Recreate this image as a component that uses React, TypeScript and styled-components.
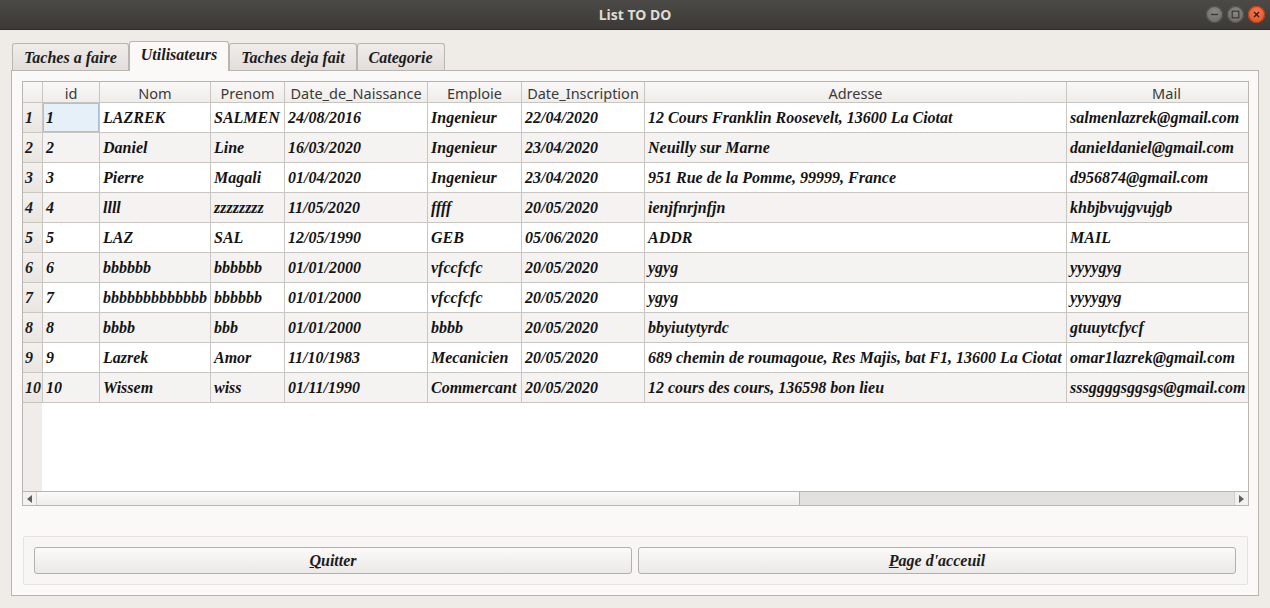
import styled, { createGlobalStyle } from "styled-components";

const GlobalStyle = createGlobalStyle`
  html, body {
    margin: 0;
    padding: 0;
    background: #efebe7;
  }
  * {
    box-sizing: border-box;
  }
`;

const Window = styled.div`
  width: 1270px;
  height: 608px;
  display: flex;
  flex-direction: column;
  background: #efebe7;
  overflow: hidden;
`;

const TitleBar = styled.div`
  height: 30px;
  flex: none;
  position: relative;
  display: flex;
  align-items: center;
  justify-content: center;
  background: linear-gradient(#4b4a46, #3b3a36);
  border-bottom: 1px solid #2c2b28;
  color: #dfdbd2;
  font-family: "Noto Sans", "DejaVu Sans", sans-serif;
  font-weight: 700;
  font-size: 14px;
`;

const Controls = styled.div`
  position: absolute;
  right: 5px;
  top: 6px;
  display: flex;
  gap: 4px;
`;

const WinButton = styled.div<{ $close?: boolean }>`
  width: 17px;
  height: 17px;
  border-radius: 50%;
  display: flex;
  align-items: center;
  justify-content: center;
  background: ${(p) =>
    p.$close
      ? "radial-gradient(circle at 50% 35%, #f47a4f, #df4a1c)"
      : "radial-gradient(circle at 50% 35%, #8a8984, #65645f)"};
  box-shadow: inset 0 0 0 1px ${(p) => (p.$close ? "#b83d16" : "#4e4d49")};
`;

const Body = styled.div`
  flex: 1;
  display: flex;
  flex-direction: column;
  padding: 11px 11px 12px 11px;
`;

const TabBar = styled.div`
  display: flex;
  align-items: flex-end;
  height: 30px;
  padding-left: 1px;
  margin-bottom: -1px;
  position: relative;
  z-index: 1;
`;

const Tab = styled.div<{ $active?: boolean }>`
  height: ${(p) => (p.$active ? "30px" : "27px")};
  margin-bottom: ${(p) => (p.$active ? "0" : "1px")};
  padding: 0 11px;
  display: flex;
  align-items: center;
  border: 1px solid #b9b5b0;
  border-bottom: none;
  border-radius: 3px 3px 0 0;
  background: ${(p) =>
    p.$active ? "#fbf9f7" : "linear-gradient(#efece9, #e2dfdb)"};
  font-family: "Liberation Serif", serif;
  font-style: italic;
  font-weight: 700;
  font-size: 16px;
  color: #1c1c1c;
  padding-top: ${(p) => (p.$active ? "0" : "1px")};
  padding-bottom: ${(p) => (p.$active ? "3px" : "0")};
`;

const Pane = styled.div`
  flex: 1;
  display: flex;
  flex-direction: column;
  border: 1px solid #b9b5b0;
  background: #fbf9f7;
  padding: 10px 9px 10px 10px;
`;

const TableView = styled.div`
  height: 425px;
  flex: none;
  display: flex;
  flex-direction: column;
  border: 1px solid #b9b5b0;
  background: #ffffff;
  overflow: hidden;
`;

const Viewport = styled.div`
  flex: 1;
  overflow: hidden;
  background: linear-gradient(to right, #efece9 19px, #ffffff 19px);
`;

const COLS = "20px 57px 111px 74px 143px 94px 123px 422px 200px";

const Row = styled.div<{ $alt?: boolean }>`
  display: grid;
  grid-template-columns: ${COLS};
  width: max-content;
  height: 30px;
  background: ${(p) => (p.$alt ? "#f5f3f1" : "#ffffff")};
`;

const HeaderRow = styled.div`
  display: grid;
  grid-template-columns: ${COLS};
  width: max-content;
  height: 21px;
`;

const HeadCell = styled.div`
  height: 21px;
  border-right: 1px solid #c9c6c2;
  border-bottom: 1px solid #c9c6c2;
  background: linear-gradient(#f9f8f6, #efedea);
  font-family: "Noto Sans", "DejaVu Sans", sans-serif;
  font-size: 14.5px;
  color: #3a3a3a;
  display: flex;
  align-items: center;
  justify-content: center;
  padding-top: 1px;
  white-space: nowrap;
  overflow: hidden;
`;

const RowHead = styled.div`
  border-right: 1px solid #c9c6c2;
  border-bottom: 1px solid #c9c6c2;
  background: linear-gradient(#f3f1ee, #e9e6e2);
  font-family: "Liberation Serif", serif;
  font-style: italic;
  font-weight: 700;
  font-size: 16px;
  color: #1c1c1c;
  display: flex;
  align-items: center;
  padding-left: 2px;
  white-space: nowrap;
  overflow: hidden;
`;

const Cell = styled.div<{ $focus?: boolean }>`
  border-right: 1px solid #c9c6c2;
  border-bottom: 1px solid #c9c6c2;
  font-family: "Liberation Serif", serif;
  font-style: italic;
  font-weight: 700;
  font-size: 16px;
  color: #141414;
  display: flex;
  align-items: center;
  padding-left: 3px;
  white-space: nowrap;
  overflow: hidden;
  background: ${(p) => (p.$focus ? "#e6f0f8" : "transparent")};
  box-shadow: ${(p) => (p.$focus ? "inset 0 0 0 1px #a9c1d6" : "none")};
`;

const HScroll = styled.div`
  height: 14px;
  flex: none;
  display: flex;
  border-top: 1px solid #b9b5b0;
  background: #e3e1dd;
`;

const ArrowBtn = styled.div<{ $side: "left" | "right" }>`
  width: 14px;
  display: flex;
  align-items: center;
  justify-content: center;
  background: #f3f1ee;
  ${(p) =>
    p.$side === "left"
      ? "border-right: 1px solid #d2cfcb;"
      : "border-left: 1px solid #d2cfcb;"}
`;

const Handle = styled.div`
  width: 763px;
  background: linear-gradient(#fbfaf9, #efedea);
  border-right: 1px solid #b5b2ae;
`;

const Trough = styled.div`
  flex: 1;
`;

const ButtonGroup = styled.div`
  margin: 30px 1px 0 1px;
  border: 1px solid #e6e3df;
  border-radius: 2px;
  background: #f8f6f4;
  padding: 10px 11px 10px 10px;
  display: grid;
  grid-template-columns: 1fr 1fr;
  gap: 6px;
`;

const PushButton = styled.button`
  height: 27px;
  border: 1px solid #b4b0ab;
  border-radius: 3px;
  background: linear-gradient(#fbfaf9, #ebe9e6);
  font-family: "Liberation Serif", serif;
  font-style: italic;
  font-weight: 700;
  font-size: 16px;
  color: #1c1c1c;
  padding: 0;
  u {
    text-decoration-thickness: 1px;
  }
`;

const users = [
  ["1", "LAZREK", "SALMEN", "24/08/2016", "Ingenieur", "22/04/2020", "12 Cours Franklin Roosevelt, 13600 La Ciotat", "salmenlazrek@gmail.com"],
  ["2", "Daniel", "Line", "16/03/2020", "Ingenieur", "23/04/2020", "Neuilly sur Marne", "danieldaniel@gmail.com"],
  ["3", "Pierre", "Magali", "01/04/2020", "Ingenieur", "23/04/2020", "951 Rue de la Pomme, 99999, France", "d956874@gmail.com"],
  ["4", "llll", "zzzzzzzz", "11/05/2020", "ffff", "20/05/2020", "ienjfnrjnfjn", "khbjbvujgvujgb"],
  ["5", "LAZ", "SAL", "12/05/1990", "GEB", "05/06/2020", "ADDR", "MAIL"],
  ["6", "bbbbbb", "bbbbbb", "01/01/2000", "vfccfcfc", "20/05/2020", "ygyg", "yyyygyg"],
  ["7", "bbbbbbbbbbbbb", "bbbbbb", "01/01/2000", "vfccfcfc", "20/05/2020", "ygyg", "yyyygyg"],
  ["8", "bbbb", "bbb", "01/01/2000", "bbbb", "20/05/2020", "bbyiutytyrdc", "gtuuytcfycf"],
  ["9", "Lazrek", "Amor", "11/10/1983", "Mecanicien", "20/05/2020", "689 chemin de roumagoue, Res Majis, bat F1, 13600 La Ciotat", "omar1lazrek@gmail.com"],
  ["10", "Wissem", "wiss", "01/11/1990", "Commercant", "20/05/2020", "12 cours des cours, 136598 bon lieu", "sssggggsggsgs@gmail.com"],
];

const headers = ["id", "Nom", "Prenom", "Date_de_Naissance", "Emploie", "Date_Inscription", "Adresse", "Mail"];

function Triangle({ dir }: { dir: "left" | "right" }) {
  return (
    <svg width="5" height="8" viewBox="0 0 5 8">
      <path d={dir === "left" ? "M5 0 L0 4 L5 8 Z" : "M0 0 L5 4 L0 8 Z"} fill="#5f5f5f" />
    </svg>
  );
}

export default function App() {
  return (
    <Window>
      <GlobalStyle />
      <TitleBar>
        List TO DO
        <Controls>
          <WinButton>
            <svg width="9" height="9" viewBox="0 0 9 9">
              <path d="M1 4.5 H8" stroke="#3a3936" strokeWidth="1.4" />
            </svg>
          </WinButton>
          <WinButton>
            <svg width="9" height="9" viewBox="0 0 9 9">
              <rect x="1.2" y="1.2" width="6.6" height="6.6" fill="none" stroke="#3a3936" strokeWidth="1.2" />
            </svg>
          </WinButton>
          <WinButton $close>
            <svg width="9" height="9" viewBox="0 0 9 9">
              <path d="M2 2 L7 7 M7 2 L2 7" stroke="#3a1a0e" strokeWidth="1.4" />
            </svg>
          </WinButton>
        </Controls>
      </TitleBar>
      <Body>
        <TabBar>
          <Tab>Taches a faire</Tab>
          <Tab $active>Utilisateurs</Tab>
          <Tab>Taches deja fait</Tab>
          <Tab>Categorie</Tab>
        </TabBar>
        <Pane>
          <TableView>
            <Viewport>
              <HeaderRow>
                <HeadCell />
                {headers.map((h) => (
                  <HeadCell key={h}>{h}</HeadCell>
                ))}
              </HeaderRow>
              {users.map((u, i) => (
                <Row key={u[0]} $alt={i % 2 === 1}>
                  <RowHead>{i + 1}</RowHead>
                  {u.map((v, j) => (
                    <Cell key={j} $focus={i === 0 && j === 0}>
                      {v}
                    </Cell>
                  ))}
                </Row>
              ))}
            </Viewport>
            <HScroll>
              <ArrowBtn $side="left">
                <Triangle dir="left" />
              </ArrowBtn>
              <Handle />
              <Trough />
              <ArrowBtn $side="right">
                <Triangle dir="right" />
              </ArrowBtn>
            </HScroll>
          </TableView>
          <ButtonGroup>
            <PushButton>
              <u>Q</u>uitter
            </PushButton>
            <PushButton>
              <u>P</u>age d'acceuil
            </PushButton>
          </ButtonGroup>
        </Pane>
      </Body>
    </Window>
  );
}
